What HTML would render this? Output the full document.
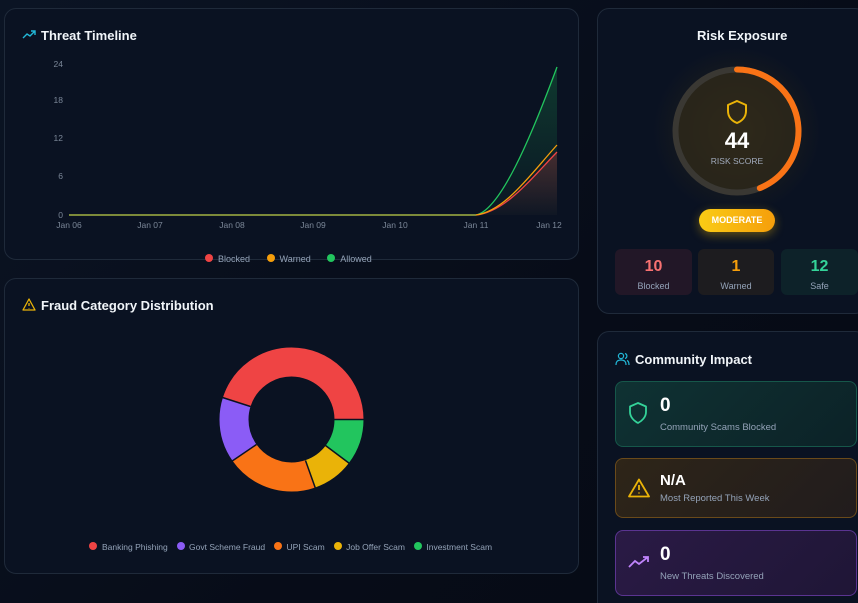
<!DOCTYPE html>
<html style="overflow:hidden;width:858px;height:603px"><head><meta charset="utf-8"><style>
*{box-sizing:border-box;margin:0;padding:0}
body{width:858px;height:603px;overflow:hidden;background:linear-gradient(135deg,#0b1424 0%,#070c18 60%,#060a14 100%);font-family:"Liberation Sans",sans-serif;color:#fff;position:relative}
.card{position:absolute;border:1px solid #1f2a3a;border-radius:12px;background:#0a1222}
.t{position:absolute;font-weight:bold;font-size:13px;color:#f1f5f9}
.sm{position:absolute;font-size:9px;color:#94a3b8}
.box{position:absolute;border-radius:6px;text-align:center}
.box b{display:block;font-size:16px;margin-top:9px}
.box span{font-size:9px;color:#94a3b8}
.ci{position:absolute;left:615px;width:242px;height:66px;border-radius:8px}
.ci b{position:absolute;left:44px;top:13px;font-size:19px}
.ci span{position:absolute;left:44px;top:40px;font-size:9.5px;color:#94a3b8}
.ci svg{position:absolute;left:12px;top:20px}
</style></head><body>
<div class="card" style="left:4px;top:8px;width:575px;height:252px"></div>
<div class="card" style="left:4px;top:278px;width:575px;height:296px"></div>
<div class="card" style="left:597px;top:8px;width:270px;height:306px"></div>
<div class="card" style="left:597px;top:331px;width:270px;height:272px;border-bottom:none;border-radius:12px 12px 0 0"></div>

<svg style="position:absolute;left:22px;top:30px" width="14" height="10" viewBox="0 0 14 10"><path d="M1 8 L5 4 L8 6 L13 1 M9 1 H13 V5" fill="none" stroke="#22b8d8" stroke-width="1.4"/></svg>
<div class="t" style="left:41px;top:28px">Threat Timeline</div>

<svg style="position:absolute;left:0;top:0" width="590" height="270">
<g font-size="8.5" fill="#7b8798" font-family="Liberation Sans" text-anchor="end">
<text x="63" y="67">24</text><text x="63" y="103">18</text><text x="63" y="141">12</text><text x="63" y="179">6</text><text x="63" y="218">0</text></g>
<g font-size="8.5" fill="#7b8798" font-family="Liberation Sans" text-anchor="middle">
<text x="69" y="228">Jan 06</text><text x="150" y="228">Jan 07</text><text x="232" y="228">Jan 08</text><text x="313" y="228">Jan 09</text><text x="395" y="228">Jan 10</text><text x="476" y="228">Jan 11</text><text x="549" y="228">Jan 12</text></g>
<defs><linearGradient id="gg" x1="0" y1="0" x2="0" y2="1"><stop offset="0" stop-color="#22c55e" stop-opacity=".22"/><stop offset="1" stop-color="#22c55e" stop-opacity=".02"/></linearGradient>
<linearGradient id="rg" x1="0" y1="0" x2="0" y2="1"><stop offset="0" stop-color="#ef4444" stop-opacity=".25"/><stop offset="1" stop-color="#ef4444" stop-opacity=".02"/></linearGradient></defs>
<path d="M476 215 C500 210 530 140 557 67 L557 215 Z" fill="url(#gg)"/>
<path d="M476 215 C505 212 530 180 557 152 L557 215 Z" fill="url(#rg)"/>
<path d="M69 215 H476 C500 210 530 140 557 67" fill="none" stroke="#22c55e" stroke-width="1.3"/>
<path d="M476 215 C505 212 530 180 557 152" fill="none" stroke="#ef4444" stroke-width="1.3"/>
<path d="M69 215 H476 C505 211 530 175 557 145" fill="none" stroke="#f59e0b" stroke-width="1.3"/>
<path d="M69 215 H476" stroke="#7c8a3a" stroke-width="2"/>
</svg>
<div class="sm" style="left:205px;top:254px"><span style="display:inline-block;width:8px;height:8px;border-radius:50%;background:#ef4444;margin-right:5px"></span>Blocked <span style="display:inline-block;width:8px;height:8px;border-radius:50%;background:#f59e0b;margin:0 5px 0 14px"></span>Warned <span style="display:inline-block;width:8px;height:8px;border-radius:50%;background:#22c55e;margin:0 5px 0 14px"></span>Allowed</div>

<svg style="position:absolute;left:22px;top:298px" width="14" height="13" viewBox="0 0 14 13"><path d="M7 1 L13 12 H1 Z M7 5 V8 M7 10 V10.5" fill="none" stroke="#eab308" stroke-width="1.3" stroke-linejoin="round"/></svg>
<div class="t" style="left:41px;top:298px">Fraud Category Distribution</div>

<svg style="position:absolute;left:219px;top:347px" width="145" height="145" viewBox="-72.5 -72.5 145 145">
<g fill="none" stroke-width="29">
<circle r="57.5" pathLength="360" stroke="#ef4444" stroke-dasharray="162 360" stroke-dashoffset="-198"/>
<circle r="57.5" pathLength="360" stroke="#22c55e" stroke-dasharray="37 360" stroke-dashoffset="0"/>
<circle r="57.5" pathLength="360" stroke="#eab308" stroke-dasharray="34 360" stroke-dashoffset="-37"/>
<circle r="57.5" pathLength="360" stroke="#f97316" stroke-dasharray="74 360" stroke-dashoffset="-71"/>
<circle r="57.5" pathLength="360" stroke="#8b5cf6" stroke-dasharray="53 360" stroke-dashoffset="-145"/>
</g>
<g stroke="#0a1222" stroke-width="1.5">
<line x1="43" y1="0" x2="73" y2="0"/><line x1="34" y1="26" x2="58" y2="44"/><line x1="14" y1="41" x2="24" y2="69"/><line x1="-35" y1="25" x2="-60" y2="42"/><line x1="-41" y1="-13" x2="-69" y2="-22"/>
</g></svg>
<div class="sm" style="left:89px;top:542px;font-size:8.5px;white-space:nowrap">
<span style="display:inline-block;width:8px;height:8px;border-radius:50%;background:#ef4444;margin-right:5px"></span>Banking Phishing
<span style="display:inline-block;width:8px;height:8px;border-radius:50%;background:#8b5cf6;margin:0 4px 0 7px"></span>Govt Scheme Fraud
<span style="display:inline-block;width:8px;height:8px;border-radius:50%;background:#f97316;margin:0 4px 0 7px"></span>UPI Scam
<span style="display:inline-block;width:8px;height:8px;border-radius:50%;background:#eab308;margin:0 4px 0 7px"></span>Job Offer Scam
<span style="display:inline-block;width:8px;height:8px;border-radius:50%;background:#22c55e;margin:0 4px 0 7px"></span>Investment Scam</div>

<div class="t" style="left:697px;top:28px">Risk Exposure</div>
<div style="position:absolute;left:652px;top:46px;width:170px;height:170px;border-radius:50%;background:radial-gradient(circle,rgba(120,90,20,.3) 0%,rgba(70,55,15,.18) 45%,rgba(10,18,34,0) 70%)"></div>
<svg style="position:absolute;left:667px;top:61px" width="140" height="140" viewBox="-70 -70 140 140">
<circle r="59" fill="#30291a" opacity=".75"/>
<circle r="61.5" fill="none" stroke="#3a3833" stroke-width="6"/>
<circle r="61.5" fill="none" stroke="#f97316" stroke-width="6" stroke-linecap="round" pathLength="100" stroke-dasharray="44 100" transform="rotate(-90)"/>
</svg>
<svg style="position:absolute;left:726px;top:99px" width="22" height="26" viewBox="0 0 22 26"><path d="M11 2 L20 6 V12 C20 18 16 22 11 24 C6 22 2 18 2 12 V6 Z" fill="none" stroke="#eab308" stroke-width="2" stroke-linejoin="round"/></svg>
<div style="position:absolute;left:697px;top:128px;width:80px;text-align:center;font-size:22px;font-weight:bold">44</div>
<div style="position:absolute;left:697px;top:156px;width:80px;text-align:center;font-size:8.5px;color:#a0aabb">RISK SCORE</div>
<div style="position:absolute;left:699px;top:209px;width:76px;height:23px;border-radius:12px;background:linear-gradient(90deg,#facc15,#f59e0b);box-shadow:0 3px 10px rgba(234,179,8,.4);text-align:center;font-size:9px;font-weight:bold;line-height:23px">MODERATE</div>
<div class="box" style="left:615px;top:249px;width:77px;height:46px;background:#221727"><b style="color:#f87171">10</b><span>Blocked</span></div>
<div class="box" style="left:698px;top:249px;width:76px;height:46px;background:#1d1c1f"><b style="color:#f59e0b">1</b><span>Warned</span></div>
<div class="box" style="left:781px;top:249px;width:77px;height:46px;background:#0d2229"><b style="color:#34d399">12</b><span>Safe</span></div>

<svg style="position:absolute;left:615px;top:352px" width="15" height="14" viewBox="0 0 15 14"><circle cx="6" cy="4" r="2.6" fill="none" stroke="#22b8d8" stroke-width="1.2"/><path d="M1 13 C1 9 3 8 6 8 C9 8 11 9 11 13 M10 1.5 A2.6 2.6 0 0 1 10 6.5 M12 8.5 C13.5 9 14 10.5 14 13" fill="none" stroke="#22b8d8" stroke-width="1.2"/></svg>
<div class="t" style="left:635px;top:352px">Community Impact</div>

<div class="ci" style="top:381px;background:linear-gradient(135deg,#0f3233,#0c2227);border:1px solid #16574a">
<svg width="20" height="22" viewBox="0 0 20 22"><path d="M10 1 L18 4.5 V10 C18 15 14 19 10 21 C6 19 2 15 2 10 V4.5 Z" fill="none" stroke="#34d399" stroke-width="1.8" stroke-linejoin="round"/></svg>
<b>0</b><span>Community Scams Blocked</span></div>
<div class="ci" style="top:458px;height:60px;background:linear-gradient(135deg,#2e2518,#211c1d);border:1px solid #6a4a1a">
<svg width="22" height="20" viewBox="0 0 22 20" style="top:19px"><path d="M11 1.5 L21 18.5 H1 Z M11 7 V12 M11 14.5 V15.5" fill="none" stroke="#eab308" stroke-width="1.8" stroke-linejoin="round"/></svg>
<b style="top:13px;font-size:15px">N/A</b><span style="top:34px">Most Reported This Week</span></div>
<div class="ci" style="top:530px;background:linear-gradient(135deg,#2a1a45,#1f1636);border:1px solid #5b3491">
<svg width="22" height="14" viewBox="0 0 22 14" style="top:24px"><path d="M1 12 L7 6 L11 9 L20 2 M15 2 H20 V7" fill="none" stroke="#c084fc" stroke-width="1.8"/></svg>
<b>0</b><span>New Threats Discovered</span></div>
</body></html>
